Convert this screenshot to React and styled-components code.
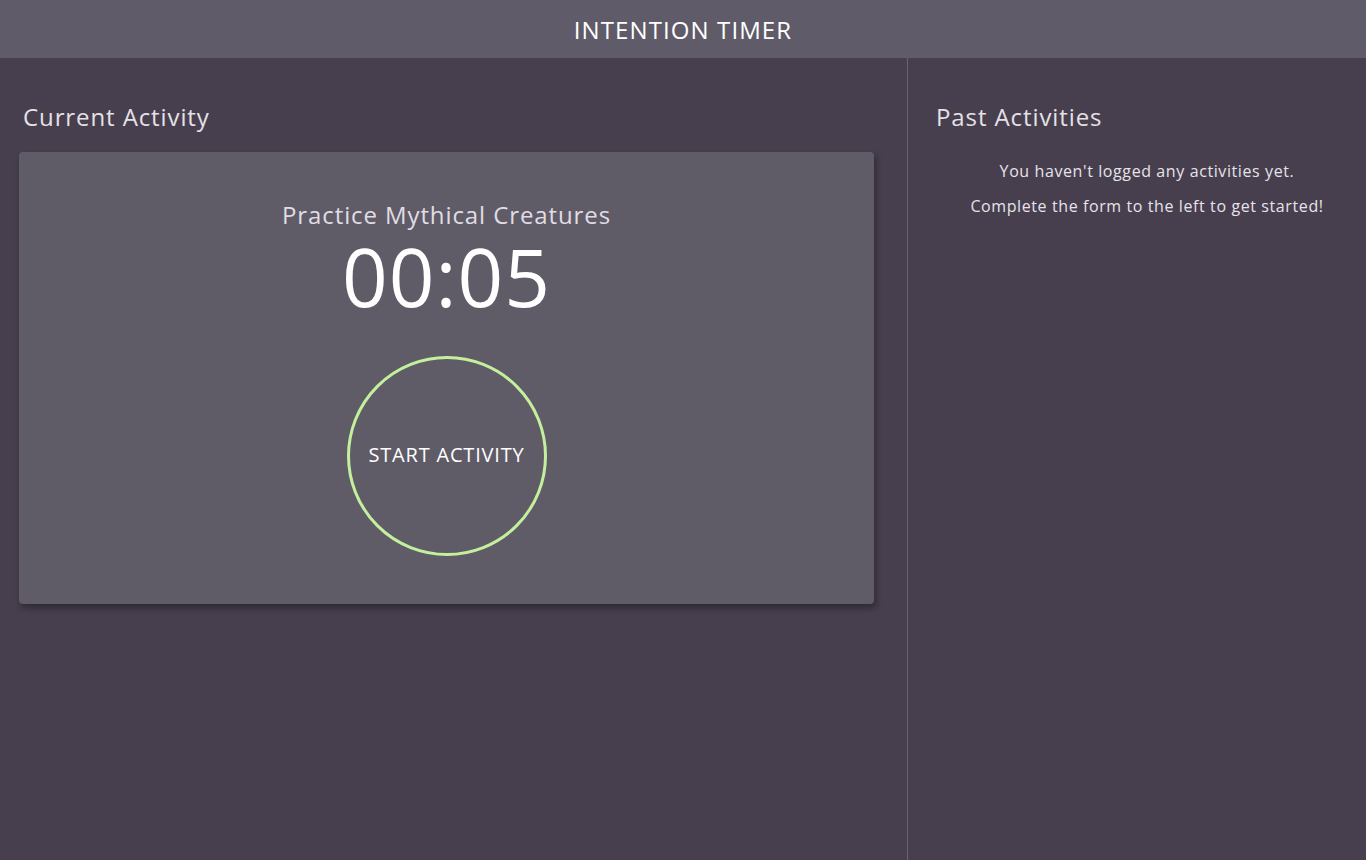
import React from 'react'
import styled, { createGlobalStyle } from 'styled-components'

const GlobalStyle = createGlobalStyle`
  html, body {
    margin: 0;
    padding: 0;
    height: 100%;
    background: #473f4d;
  }
  body {
    font-family: "Open Sans", "Noto Sans", sans-serif;
    color: #e6e4e8;
  }
  #root {
    height: 100%;
  }
`

const Page = styled.div`
  display: flex;
  flex-direction: column;
  height: 100vh;
`

const Header = styled.header`
  height: 58px;
  flex-shrink: 0;
  background: #5f5b68;
  display: flex;
  align-items: center;
  justify-content: center;
  font-size: 24px;
  color: #ffffff;
  letter-spacing: 1.1px;
`

const Main = styled.main`
  flex: 1;
  display: grid;
  grid-template-columns: 908px 1fr;
`

const LeftColumn = styled.section`
  padding: 40px 33px 0 19px;
  border-right: 1px solid #6a6472;
`

const RightColumn = styled.section`
  padding: 40px 8px 0 28px;
`

const SectionTitle = styled.h2`
  margin: 0 0 ${props => props.gap}px ${props => props.indent}px;
  font-size: 24px;
  font-weight: 400;
  line-height: 38px;
  letter-spacing: 0.9px;
  color: #e4e1e8;
`

const Card = styled.div`
  height: 452px;
  background: #5f5c68;
  border-radius: 4px;
  box-shadow: 2px 4px 6px rgba(20, 14, 26, 0.45);
  display: flex;
  flex-direction: column;
  align-items: center;
  padding-top: 46px;
  box-sizing: border-box;
`

const ActivityName = styled.p`
  margin: 0;
  font-size: 24px;
  line-height: 34px;
  letter-spacing: 0.9px;
  color: #e0dde4;
`

const Countdown = styled.p`
  margin: 5px 0 0;
  font-size: 80px;
  line-height: 78px;
  letter-spacing: 1px;
  color: #ffffff;
`

const StartButton = styled.button`
  margin-top: 41px;
  width: 200px;
  height: 200px;
  border-radius: 50%;
  border: 3px solid #c4ef9d;
  background: transparent;
  color: #ffffff;
  font-family: inherit;
  font-size: 20px;
  letter-spacing: 0.8px;
  padding: 0 0 4px;
  cursor: pointer;
  box-sizing: border-box;
`

const EmptyText = styled.p`
  margin: 0 0 ${props => props.gap}px;
  text-align: center;
  font-size: 16px;
  line-height: 22px;
  letter-spacing: 0.6px;
  color: #e6e3ea;
`

export default function App() {
  return (
    <>
      <GlobalStyle />
      <Page>
        <Header>INTENTION TIMER</Header>
        <Main>
          <LeftColumn>
            <SectionTitle indent={4} gap={16}>Current Activity</SectionTitle>
            <Card>
              <ActivityName>Practice Mythical Creatures</ActivityName>
              <Countdown>00:05</Countdown>
              <StartButton>START ACTIVITY</StartButton>
            </Card>
          </LeftColumn>
          <RightColumn>
            <SectionTitle indent={0} gap={24}>Past Activities</SectionTitle>
            <EmptyText gap={13}>You haven't logged any activities yet.</EmptyText>
            <EmptyText gap={0}>Complete the form to the left to get started!</EmptyText>
          </RightColumn>
        </Main>
      </Page>
    </>
  )
}
